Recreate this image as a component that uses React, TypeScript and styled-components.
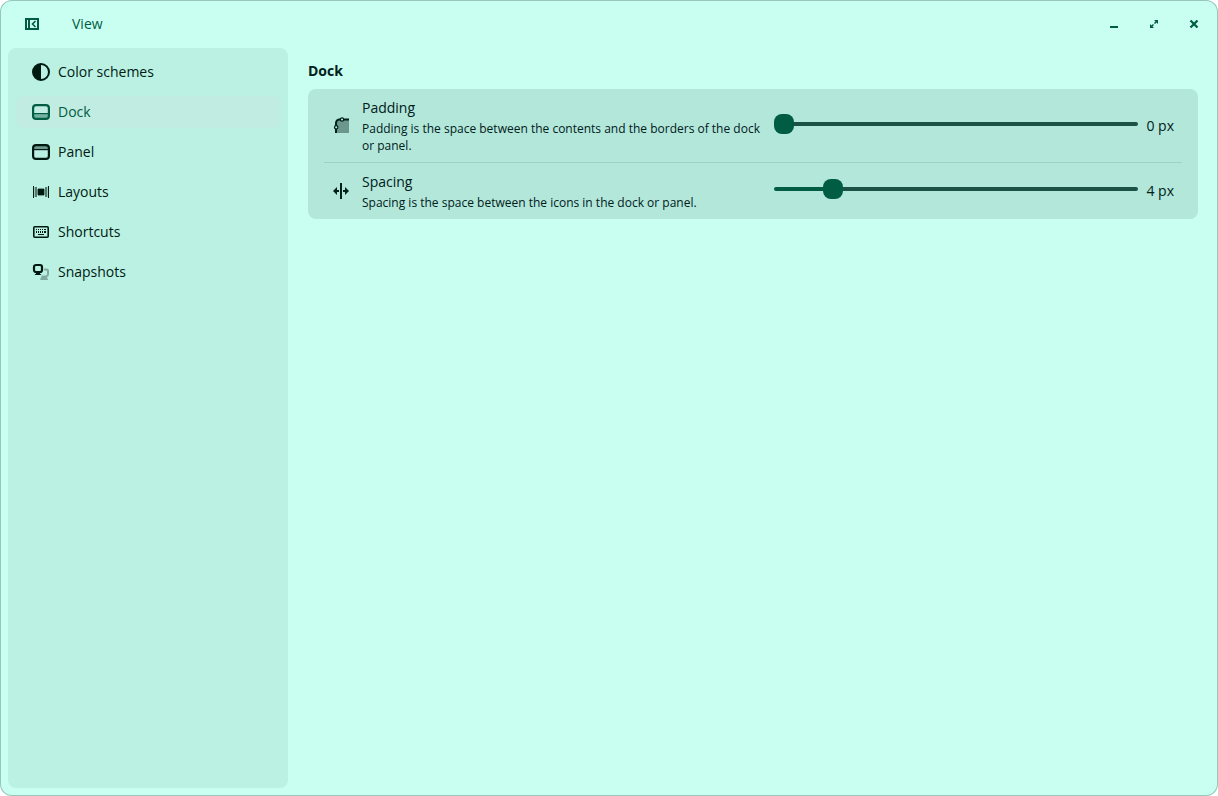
import React, { useState } from "react";
import styled, { createGlobalStyle } from "styled-components";

const c = {
  bg: "#c8fff1",
  side: "#bbf1e3",
  card: "#b3e7da",
  active: "#c1ece1",
  accent: "#005c43",
  text: "#00201a",
  ink: "#001a12",
  track: "#1c5245",
  line: "#a1d1c4",
};

const Global = createGlobalStyle`
  *, *::before, *::after { box-sizing: border-box; }
  html { background: #fff; }
  body { margin: 0; font: 14px/20px "Open Sans", "Noto Sans", sans-serif; color: ${c.text}; }
  h1, h2, h3, p { margin: 0; font-weight: 400; }
  button { font: inherit; color: inherit; background: none; border: 0; padding: 0; }
  svg { display: block; flex: none; }
`;

const Window = styled.div`
  min-height: 100vh;
  display: flex;
  flex-direction: column;
  background: ${c.bg};
  box-shadow: inset 0 0 0 1px #98c6ba;
  border-radius: 12px;
`;

const HeaderBar = styled.header`
  display: flex;
  align-items: center;
  height: 48px;
  padding: 0 8px;
  color: ${c.accent};
`;

const IconButton = styled.button`
  display: grid;
  place-items: center;
  width: 32px;
  height: 32px;
`;

const MenuBar = styled.div`
  flex: 1;
  display: flex;
  align-items: center;
  gap: 16px;
  padding-left: 8px;
`;

const MenuButton = styled.button`
  height: 32px;
  padding: 0 8px;
`;

const Controls = styled.div`
  display: flex;
  gap: 8px;
`;

const Body = styled.div`
  flex: 1;
  display: flex;
  gap: 20px;
  padding: 0 20px 8px 8px;
`;

const Sidebar = styled.nav`
  flex: 0 0 280px;
  display: flex;
  flex-direction: column;
  gap: 8px;
  padding: 8px;
  background: ${c.side};
  border-radius: 8px;
`;

const NavItem = styled.button<{ $active?: boolean }>`
  display: flex;
  align-items: center;
  gap: 8px;
  height: 32px;
  padding: 0 16px;
  border-radius: 8px;
  text-align: left;
  background: ${(p) => (p.$active ? c.active : "transparent")};
  color: ${(p) => (p.$active ? c.accent : c.ink)};
`;

const Main = styled.main`
  flex: 1;
  min-width: 0;
  padding-top: 13px;
`;

const SectionTitle = styled.h2`
  font-size: 14px;
  line-height: 20px;
  font-weight: 700;
  margin-bottom: 8px;
`;

const Card = styled.section`
  padding: 0 16px;
  background: ${c.card};
  border-radius: 8px;
`;

const Row = styled.div`
  display: grid;
  grid-template-columns: 18px 1fr 1fr;
  column-gap: 12px;
  align-items: center;
  padding: 8px;
  & + & {
    border-top: 1px solid ${c.line};
  }
`;

const RowTitle = styled.label`
  display: block;
  line-height: 21px;
  margin-bottom: 2px;
`;

const Description = styled.p`
  font-size: 12px;
  line-height: 17px;
`;

const Control = styled.div`
  display: flex;
  gap: 8px;
  height: 24px;
`;

const Slider = styled.input<{ $ratio: number }>`
  appearance: none;
  flex: 1;
  min-width: 0;
  height: 20px;
  margin: 0;
  background: transparent;
  &::-webkit-slider-runnable-track {
    height: 4px;
    border-radius: 2px;
    background: linear-gradient(
      to right,
      ${c.accent} ${(p) => p.$ratio * 100}%,
      ${c.track} ${(p) => p.$ratio * 100}%
    );
  }
  &::-webkit-slider-thumb {
    appearance: none;
    width: 20px;
    height: 20px;
    margin-top: -8px;
    border-radius: 8px;
    background: ${c.accent};
  }
`;

const Value = styled.output`
  flex: none;
  line-height: 23px;
`;

const Icon = ({ children }: { children: React.ReactNode }) => (
  <svg width="18" height="18" viewBox="0 0 18 18" fill="currentColor" aria-hidden="true">
    {children}
  </svg>
);

const ContrastIcon = () => (
  <Icon>
    <circle cx="9" cy="9" r="8" fill="none" stroke="currentColor" strokeWidth="2" />
    <path d="M9 1a8 8 0 0 0 0 16z" />
  </Icon>
);

const DockIcon = () => (
  <Icon>
    <path d="M2 11h14v4H2z" opacity=".4" />
    <rect x="1.100" y="2.100" width="15.800" height="13.800" rx="3" fill="none" stroke="currentColor" strokeWidth="2.200" />
    <path d="M2 10h14v1.200H2z" />
  </Icon>
);

const PanelIcon = () => (
  <Icon>
    <path d="M2 3h14v3H2z" opacity=".4" />
    <rect x="1.100" y="2.100" width="15.800" height="13.800" rx="3" fill="none" stroke="currentColor" strokeWidth="2.200" />
    <path d="M2 6h14v1.200H2z" />
  </Icon>
);

const LayoutsIcon = () => (
  <Icon>
    <path d="M1 3h1v12H1zM16 3h1v12h-1z" />
    <path d="M2.700 4H5v10H2.700zM13 4h2.300v10H13z" opacity=".55" />
    <path d="M6 6h6v6H6z" stroke="currentColor" strokeWidth=".8" />
  </Icon>
);

const KeyboardIcon = () => (
  <Icon>
    <rect x="1.800" y="3.800" width="14.400" height="10.400" rx="1" fill="none" stroke="currentColor" strokeWidth="1.600" />
    <path d="M4 6h1v1H4zM6 6h1v1H6zM8 6h1v1H8zM10 6h1v1h-1zM12 6h2v1h-2zM4 8h1v2H4zM6 8h1v2H6zM8 8h1v2H8zM10 8h1v2h-1zM12 8h2v2h-2zM6 11h6v1H6z" />
  </Icon>
);

const SnapshotsIcon = () => (
  <Icon>
    <rect x="2" y="2" width="8" height="7" rx="2" fill="none" stroke="currentColor" strokeWidth="2.200" />
    <path d="M4 9h4v1.500L9.500 12h-7L4 10.500z" />
    <path
      d="M12 5.500h2.500a2.500 2.500 0 0 1 2.500 2.500v3.500a2.500 2.500 0 0 1-2 2.400L16 17H8l1.200-3H9.500v-1.500h4.500a1 1 0 0 0 1-1V8.500a1 1 0 0 0-1-1h-2z"
      opacity=".32"
    />
  </Icon>
);

const PaddingIcon = () => (
  <Icon>
    <path d="M5 3h12v13H5z" opacity=".4" />
    <path d="M4 16V6a3.500 3.500 0 0 1 3.500-3.500H17" fill="none" stroke="currentColor" strokeWidth="2" />
    <g fill={c.card} stroke="currentColor" strokeWidth="1.200">
      <circle cx="10" cy="2.500" r="1.700" />
      <circle cx="4.200" cy="10.300" r="1.700" />
    </g>
  </Icon>
);

const SpacingIcon = () => (
  <Icon>
    <path d="M8 1h2v16H8z" />
    <path d="M1 9l4-4v3h2v2H5v3zM17 9l-4-4v3h-2v2h2v3z" />
  </Icon>
);

const SidebarIcon = () => (
  <Icon>
    <path d="M2 3h14v12H2zM4 5v8h1V5zM7 5v8h7V5z" fillRule="evenodd" />
    <path d="M12.500 6l-3 3 3 3" fill="none" stroke="currentColor" strokeWidth="1.600" />
  </Icon>
);

const MinimizeIcon = () => (
  <Icon>
    <path d="M5 11h8v2H5z" />
  </Icon>
);

const MaximizeIcon = () => (
  <Icon>
    <path d="M9 5h4v4zM5 9v4h4z" />
    <path d="M6 12l2.500-2.500M9.500 8.500L12 6" stroke="currentColor" strokeWidth="1.500" />
  </Icon>
);

const CloseIcon = () => (
  <Icon>
    <path d="M5.500 5.500l7 7M12.500 5.500l-7 7" stroke="currentColor" strokeWidth="2.200" />
  </Icon>
);

const pages = [
  { name: "Color schemes", Glyph: ContrastIcon },
  { name: "Dock", Glyph: DockIcon },
  { name: "Panel", Glyph: PanelIcon },
  { name: "Layouts", Glyph: LayoutsIcon },
  { name: "Shortcuts", Glyph: KeyboardIcon },
  { name: "Snapshots", Glyph: SnapshotsIcon },
];

const MAX = 28;

type SettingProps = { id: string; title: string; text: string; initial: number; icon: React.ReactNode };

function Setting({ id, title, text, initial, icon }: SettingProps) {
  const [value, setValue] = useState(initial);
  return (
    <Row>
      {icon}
      <div>
        <RowTitle htmlFor={id}>{title}</RowTitle>
        <Description>{text}</Description>
      </div>
      <Control>
        <Slider
          id={id}
          type="range"
          min={0}
          max={MAX}
          value={value}
          $ratio={value / MAX}
          onChange={(e) => setValue(Number(e.target.value))}
        />
        <Value htmlFor={id}>{value} px</Value>
      </Control>
    </Row>
  );
}

export default function App() {
  const [page, setPage] = useState("Dock");
  return (
    <>
      <Global />
      <Window>
        <HeaderBar>
          <MenuBar>
            <IconButton aria-label="Toggle sidebar"><SidebarIcon /></IconButton>
            <MenuButton>View</MenuButton>
          </MenuBar>
          <Controls>
            <IconButton aria-label="Minimize"><MinimizeIcon /></IconButton>
            <IconButton aria-label="Maximize"><MaximizeIcon /></IconButton>
            <IconButton aria-label="Close"><CloseIcon /></IconButton>
          </Controls>
        </HeaderBar>
        <Body>
          <Sidebar>
            {pages.map(({ name, Glyph }) => (
              <NavItem key={name} $active={name === page} onClick={() => setPage(name)}>
                <Glyph />
                {name}
              </NavItem>
            ))}
          </Sidebar>
          <Main>
            <SectionTitle>Dock</SectionTitle>
            <Card>
              <Setting
                id="padding"
                title="Padding"
                text="Padding is the space between the contents and the borders of the dock or panel."
                initial={0}
                icon={<PaddingIcon />}
              />
              <Setting
                id="spacing"
                title="Spacing"
                text="Spacing is the space between the icons in the dock or panel."
                initial={4}
                icon={<SpacingIcon />}
              />
            </Card>
          </Main>
        </Body>
      </Window>
    </>
  );
}
